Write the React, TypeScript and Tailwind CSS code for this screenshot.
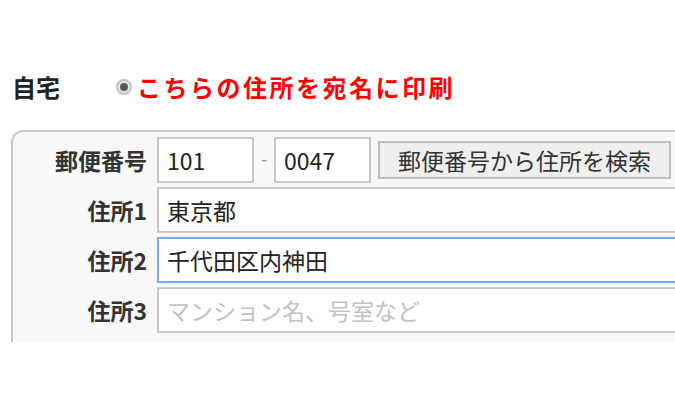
import React from 'react';

const font = { fontFamily: '"Noto Sans CJK JP", "Noto Sans", sans-serif' };

function Radio() {
  return (
    <span className="flex h-[16px] w-[16px] shrink-0 items-center justify-center rounded-full border-2 border-[#c4c4c4] bg-[#e6e6e6]">
      <span className="h-[8px] w-[8px] rounded-full bg-[#595959]" />
    </span>
  );
}

function Field({ label, children }: { label: string; children: React.ReactNode }) {
  return (
    <div className="flex h-[46px] items-center">
      <div className="w-[134px] text-right text-[23px] font-bold text-[#333]">{label}</div>
      <div className="ml-[10px] flex flex-1 items-center">{children}</div>
    </div>
  );
}

export default function App() {
  return (
    <div className="relative h-[404px] w-[675px] overflow-hidden bg-white" style={font}>
      <div className="mt-[71px] flex h-[32px] items-center">
        <h2 className="ml-[12px] w-[104px] text-[24px] font-bold leading-none text-[#222]">自宅</h2>
        <Radio />
        <span className="ml-[5px] text-[24px] font-bold leading-none tracking-[2.5px] text-[#ff0000]">
          こちらの住所を宛名に印刷
        </span>
      </div>

      <div className="ml-[11px] mt-[27px] h-[212px] w-[700px] overflow-hidden rounded-tl-[12px] border-l-2 border-t-2 border-[#cacaca] bg-[#f8f8f8]">
        <div className="flex flex-col gap-[4px] pt-[5px]">
          <Field label="郵便番号">
            <input
              defaultValue="101"
              readOnly
              className="h-[46px] w-[97px] border-2 border-[#c8c8c8] bg-white pl-[8px] text-[23px] text-[#222] outline-none"
            />
            <span className="w-[20px] pb-[3px] text-center text-[18px] text-[#999]">-</span>
            <input
              defaultValue="0047"
              readOnly
              className="h-[46px] w-[97px] border-2 border-[#c8c8c8] bg-white pl-[8px] text-[23px] text-[#222] outline-none"
            />
            <button className="ml-[7px] h-[38px] w-[293px] border-2 border-[#bdbdbd] bg-[#efefef] text-[23px] leading-none text-[#333]">
              郵便番号から住所を検索
            </button>
          </Field>
          <Field label="住所1">
            <input
              defaultValue="東京都"
              readOnly
              className="h-[46px] w-full border-2 border-[#c8c8c8] bg-white pl-[8px] text-[23px] text-[#222] outline-none"
            />
          </Field>
          <Field label="住所2">
            <input
              defaultValue="千代田区内神田"
              readOnly
              className="h-[46px] w-full border-2 border-[#7ba7ec] bg-white pl-[8px] text-[23px] text-[#222] outline-none"
            />
          </Field>
          <Field label="住所3">
            <input
              placeholder="マンション名、号室など"
              readOnly
              className="h-[46px] w-full border-2 border-[#c8c8c8] bg-white pl-[8px] text-[23px] text-[#222] outline-none placeholder:text-[#c2c2c2]"
            />
          </Field>
        </div>
      </div>
    </div>
  );
}
